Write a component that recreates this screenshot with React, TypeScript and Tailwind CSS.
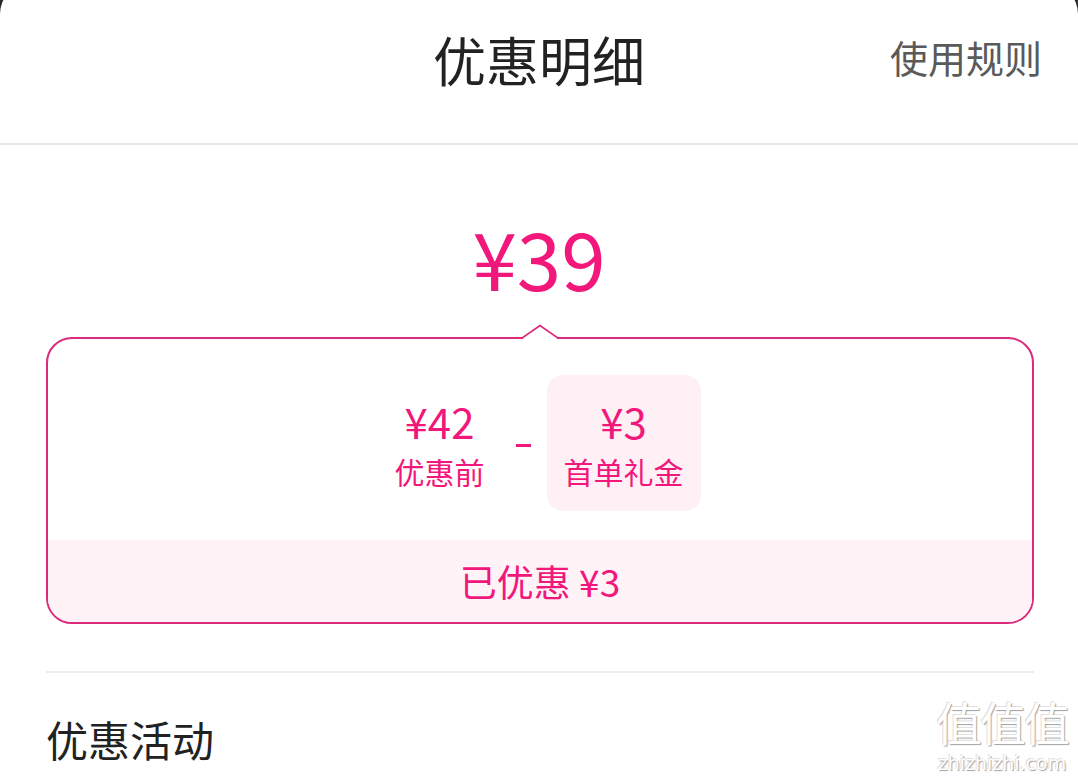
import React from "react";

const PINK = "text-[#f2177b]";

function Notch() {
  return (
    <svg
      className="absolute left-[476px] top-[-13px]"
      width="36"
      height="16"
      viewBox="0 0 36 16"
      fill="none"
    >
      <rect x="1" y="12" width="34" height="4" fill="#fff" />
      <path d="M0 14 L18 1.5 L36 14" stroke="#dc2a7a" strokeWidth="1.8" fill="#fff" />
    </svg>
  );
}

function Watermark() {
  return (
    <div className="absolute right-[10px] bottom-[4px] flex flex-col items-center text-white select-none [text-shadow:1px_1px_1px_#a0a0a0,-1px_-1px_0_#e0e0e0]">
      <span className="text-[46px] leading-none tracking-[-2px] font-['Noto_Sans_CJK_SC',sans-serif]">值值值</span>
      <span className="text-[19px] leading-none mt-[10px] font-['DejaVu_Sans',sans-serif]">zhizhizhi.com</span>
    </div>
  );
}

export default function App() {
  return (
    <div className="w-[1078px] h-[777px] overflow-hidden bg-[#2b2b2b] font-['Noto_Sans_CJK_SC','Noto_Sans',sans-serif]">
      <div className="relative -mt-4 pt-4 h-[793px] bg-white rounded-t-[30px]">
        {/* header */}
        <div className="grid grid-cols-[1fr_auto_1fr] h-[143px]">
          <div />
          <h1 className="pt-[33px] text-[53px] leading-none text-[#222] font-normal">优惠明细</h1>
          <div className="justify-self-end pt-[38px] pr-[36px] text-[38px] leading-none text-[#5a5a5a]">
            使用规则
          </div>
        </div>
        <div className="h-[2px] bg-[#e8e8e8]" />

        {/* final price */}
        <div className={`mt-[71px] text-center text-[80px] leading-none ${PINK}`}>¥39</div>

        {/* breakdown */}
        <div className="relative mt-[41px] ml-[46px] mr-[44px]">
          <Notch />
          <div className="rounded-[26px] border-2 border-[#dc2a7a] overflow-hidden">
            <div className="h-[201px] flex items-center justify-center pt-[6px]">
              <div className={`w-[120px] flex flex-col items-center ${PINK}`}>
                <span className="text-[42px] leading-none">¥42</span>
                <span className="mt-[14px] text-[30px] leading-none">优惠前</span>
              </div>
              <div className="w-[47px] flex justify-center pt-[6px]">
                <div className="w-[15px] h-[3px] bg-[#f2177b]" />
              </div>
              <div className={`w-[154px] h-[136px] rounded-[16px] bg-[#fff0f6] flex flex-col items-center justify-center ${PINK}`}>
                <span className="text-[42px] leading-none">¥3</span>
                <span className="mt-[14px] text-[30px] leading-none">首单礼金</span>
              </div>
            </div>
            <div className={`h-[82px] bg-[#fff3f8] flex items-center justify-center text-[37px] leading-none ${PINK}`}>
              已优惠 ¥3
            </div>
          </div>
        </div>

        <div className="mt-[47px] ml-[46px] mr-[44px] h-[2px] bg-[#ececec]" />

        <div className="mt-[45px] pl-[46px] text-[42px] leading-none text-[#222]">优惠活动</div>

        <Watermark />
      </div>
    </div>
  );
}
